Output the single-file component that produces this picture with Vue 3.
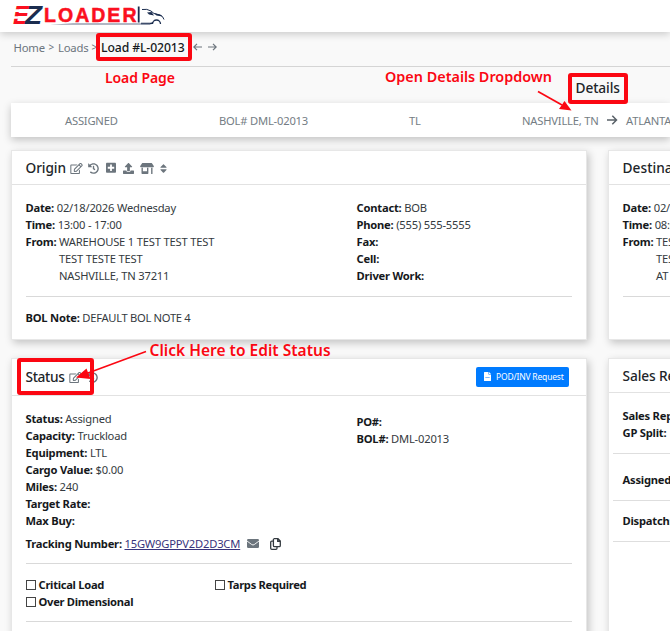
<script setup>
const icons = {
  edit: { box: '0 0 576 512', d: 'M402.3 344.9l32-32c5-5 13.7-1.500 13.700 5.700V464c0 26.500-21.500 48-48 48H48c-26.500 0-48-21.500-48-48V112c0-26.500 21.500-48 48-48h273.500c7.100 0 10.700 8.600 5.700 13.700l-32 32c-1.500 1.500-3.500 2.300-5.700 2.300H48v352h352V350.500c0-2.100.8-4.100 2.300-5.600zM558.900 143L296.300 405.700l-90.400 10c-26.200 2.900-48.500-19.200-45.600-45.600l10-90.400L432.900 17.100c22.900-22.900 59.900-22.900 82.700 0l43.200 43.200c22.900 22.900 22.900 60 .1 82.700zM460.100 174L402 115.900 216.200 301.800l-7.300 65.300 65.300-7.300L460.100 174zm64.800-79.700l-43.200-43.200c-4.100-4.100-10.800-4.100-14.800 0L436 82l58.100 58.100 30.900-30.900c4-4.200 4-10.800-.1-14.900z' },
  history: { box: '0 0 512 512', d: 'M504 255.500c.3 136.600-111.200 248.400-247.800 248.500-59 0-113.200-20.500-155.800-54.900-11.100-8.900-11.900-25.500-1.800-35.600l11.300-11.300c8.600-8.600 22.400-9.600 31.900-2C173.100 425.100 212.800 440 256 440c101.700 0 184-82.300 184-184 0-101.700-82.300-184-184-184-48.800 0-93.100 19-126.100 49.900l50.800 50.800c10.100 10.100 2.900 27.300-11.300 27.300H24c-8.800 0-16-7.200-16-16V38.600c0-14.300 17.200-21.400 27.300-11.300l49.400 49.400C129.200 34.100 189.600 8 256 8c136.800 0 247.700 110.800 248 247.500zM323.100 326.600l9.800-12.600c8.100-10.500 6.300-25.500-4.200-33.700L288 248.700V152c0-13.300-10.700-24-24-24h-16c-13.300 0-24 10.700-24 24v128l65.400 50.900c10.500 8.100 25.500 6.300 33.700-4.300z' },
  plus: { box: '0 0 448 512', d: 'M400 32H48C21.500 32 0 53.500 0 80v352c0 26.500 21.500 48 48 48h352c26.500 0 48-21.500 48-48V80c0-26.500-21.500-48-48-48zm-32 252c0 6.600-5.400 12-12 12h-92v92c0 6.600-5.400 12-12 12h-56c-6.600 0-12-5.400-12-12v-92H92c-6.600 0-12-5.400-12-12v-56c0-6.600 5.400-12 12-12h92v-92c0-6.600 5.400-12 12-12h56c6.600 0 12 5.400 12 12v92h92c6.600 0 12 5.400 12 12z' },
  upload: { box: '0 0 512 512', d: 'M296 384h-80c-13.300 0-24-10.700-24-24V192h-87.700c-17.800 0-26.700-21.500-14.100-34.100L242.300 5.700c7.500-7.500 19.800-7.500 27.300 0l152.200 152.200c12.600 12.600 3.700 34.100-14.100 34.100H320v168c0 13.300-10.700 24-24 24zm216-8v112c0 13.300-10.700 24-24 24H24c-13.300 0-24-10.700-24-24V376c0-13.300 10.700-24 24-24h136v8c0 30.900 25.100 56 56 56h80c30.900 0 56-25.100 56-56v-8h136c13.300 0 24 10.700 24 24z' },
  store: { box: '0 0 640 512', d: 'M320 384H128V224H64v256c0 17.700 14.300 32 32 32h256c17.700 0 32-14.300 32-32V224h-64v160zm314.600-241.800l-85.300-128c-6-8.900-16-14.200-26.700-14.200H117.400c-10.700 0-20.700 5.300-26.600 14.200l-85.300 128C-8.700 163.500 6.500 192 32.100 192H608c25.500 0 40.700-28.500 26.600-49.800zM512 496c0 8.800 7.200 16 16 16h32c8.800 0 16-7.200 16-16V224h-64v272z' },
  sort: { box: '0 0 320 512', d: 'M41 288h238c21.400 0 32.100 25.900 17 41L177 448c-9.400 9.400-24.600 9.400-33.900 0L24 329c-15.100-15.100-4.400-41 17-41zm255-105L177 64c-9.400-9.400-24.600-9.400-33.900 0L24 183c-15.100 15.100-4.400 41 17 41h238c21.400 0 32.100-25.900 17-41z' }
}

const originIcons = ['edit', 'history', 'plus', 'upload', 'store', 'sort']

const address = ['TEST TESTE TEST', 'NASHVILLE, TN 37211']

const contact = [
  ['Contact:', 'BOB'],
  ['Phone:', '(555) 555-5555'],
  ['Fax:', ''],
  ['Cell:', ''],
  ['Driver Work:', '']
]

const statusRows = [
  ['Status:', 'Assigned'],
  ['Capacity:', 'Truckload'],
  ['Equipment:', 'LTL'],
  ['Cargo Value:', '$0.00'],
  ['Miles:', '240'],
  ['Target Rate:', ''],
  ['Max Buy:', '']
]
</script>

<template>
  <div class="page">
    <header class="topbar">
      <svg class="logo" width="156" height="24" viewBox="0 0 156 24">
        <g font-family="Liberation Sans" font-weight="700" font-size="26">
          <text class="red" x="0" y="20.500" textLength="16" lengthAdjust="spacingAndGlyphs" font-style="italic">E</text>
          <path d="M0 7.600H14M0 14.500H12" fill="none" stroke="#fff" stroke-width="2.600" />
          <text class="navy" x="12" y="20.500" textLength="17" lengthAdjust="spacingAndGlyphs" font-style="italic">Z</text>
        </g>
        <text class="red word" x="31" y="18.800" textLength="92.500" lengthAdjust="spacing" font-family="Liberation Sans" font-weight="700" font-size="19.500">LOADER</text>
        <path d="M125.700 3.500V19.500" stroke="#1b2d4f" stroke-width="1.800" fill="none" />
        <path d="M129 6.500q5-1 9 1.500l3 2.500 6 1.500q3 1 4 4.500" fill="none" stroke="#1b2d4f" stroke-width="1" />
        <path d="M134 9.500l4.500-.5 2.500 3.500-5-1zM141 10l7 2 1.500 1.500-6-1z" fill="#1b2d4f" />
        <path d="M128 20.500h10l2.500-1.500M139.500 21a4 4 0 0 1 8 0" fill="none" stroke="#1b2d4f" stroke-width="1.300" />
        <path d="M37 21.500L60 20.600H137V21.500z" fill="#65718a" />
      </svg>
    </header>

    <nav class="crumbs">
      <span class="crumb">Home</span><span class="sep">&gt;</span>
      <span class="crumb loads">Loads</span><span class="sep">&gt;</span>
      <span class="current">Load #L-02013</span>
      <svg class="nav-arrow" width="9" height="8" viewBox="0 0 9 8"><path d="M9 4H.8M4 .8L.8 4 4 7.200" /></svg>
      <svg class="nav-arrow" width="9" height="8" viewBox="0 0 9 8"><path d="M0 4h8.200M5 .8L8.200 4 5 7.200" /></svg>
    </nav>

    <div class="details"><span>Details</span></div>

    <section class="summary">
      <span class="s-status">ASSIGNED</span>
      <span class="s-bol">BOL# DML-02013</span>
      <span class="s-type">TL</span>
      <span class="s-from">NASHVILLE, TN</span>
      <svg class="s-arrow" width="11" height="10" viewBox="0 0 11 10"><path d="M0 5h9.500M5.300 .8L9.500 5 5.300 9.200" /></svg>
      <span class="s-to">ATLANTA, GA</span>
    </section>

    <main class="grid">
      <section class="card origin">
        <div class="head">
          <h2 class="t-origin">Origin</h2>
          <svg v-for="name in originIcons" :key="name" :class="['icon', name]" :viewBox="icons[name].box"><path :d="icons[name].d" /></svg>
        </div>
        <div class="body">
          <div class="cols">
            <div>
              <p><b>Date:</b> 02/18/2026 Wednesday</p>
              <p><b>Time:</b> 13:00 - 17:00</p>
              <p><b>From:</b> WAREHOUSE 1 TEST TEST TEST</p>
              <p v-for="line in address" :key="line" class="indent">{{ line }}</p>
            </div>
            <div>
              <p v-for="[label, value] in contact" :key="label"><b>{{ label }}</b> {{ value }}</p>
            </div>
          </div>
          <hr />
          <p class="note"><b>BOL Note:</b> DEFAULT BOL NOTE 4</p>
        </div>
      </section>

      <section class="card dest">
        <div class="head"><h2 class="t-dest">Destination</h2></div>
        <div class="body">
          <div class="cols">
            <div>
              <p><b>Date:</b> 02/19/2026</p>
              <p><b>Time:</b> 08:00</p>
              <p><b>From:</b> TEST</p>
              <p class="indent">TEST</p>
              <p class="indent">AT</p>
            </div>
          </div>
          <hr />
        </div>
      </section>

      <section class="card status">
        <div class="head">
          <h2 class="t-status">Status</h2>
          <svg class="icon edit" :viewBox="icons.edit.box"><path :d="icons.edit.d" /></svg>
          <svg class="icon history" :viewBox="icons.history.box"><path :d="icons.history.d" /></svg>
          <button class="request">
            <svg width="7" height="9" viewBox="0 0 7 9"><path d="M0 .5Q0 0 .5 0H4.500V2.500H7V8.500Q7 9 6.500 9H.5Q0 9 0 8.500zM5 0L7 2H5z" fill="#fff" /><path d="M1.300 5.500h4.400" stroke="#7bb8ff" /></svg>
            <span>POD/INV Request</span>
          </button>
        </div>
        <div class="body">
          <div class="cols">
            <div>
              <p v-for="[label, value] in statusRows" :key="label"><b>{{ label }}</b> {{ value }}</p>
            </div>
            <div class="refs">
              <p><b>PO#:</b></p>
              <p><b>BOL#:</b> DML-02013</p>
            </div>
          </div>
          <div class="tracking">
            <b>Tracking Number:</b><a>15GW9GPPV2D2D3CM</a>
            <svg class="mail" width="12" height="9" viewBox="0 0 12 9"><rect width="12" height="9" rx="1.200" fill="#6c757d" /><path d="M0 2l4.700 3.500q1.300 1 2.600 0L12 2" fill="none" stroke="#fff" stroke-width=".9" /></svg>
            <svg class="copy" width="11" height="12" viewBox="0 0 11 12"><path d="M4 .7H8L10.300 3V7.500Q10.300 8.700 9.200 8.700H4.500Q3.400 8.700 3.400 7.500V1.500Q3.400.7 4.200.7zM7.700.7V3.300H10.300M3.300 3.200H1.700Q.7 3.200.7 4.200V10.200Q.7 11.300 1.800 11.300H6Q7 11.300 7 10.300V8.700" fill="none" stroke="#343a40" stroke-width="1.300" /></svg>
          </div>
          <hr />
          <div class="checks">
            <label><i></i>Critical Load</label>
            <label><i></i>Tarps Required</label>
            <label><i></i>Over Dimensional</label>
          </div>
          <hr />
        </div>
      </section>

      <section class="card sales">
        <div class="head"><h2 class="t-sales">Sales Rep</h2></div>
        <div class="row first"><p><b>Sales Rep:</b></p><p><b>GP Split:</b></p></div>
        <div class="row second"><p><b>Assigned:</b></p></div>
        <div class="row third"><p><b>Dispatch:</b></p></div>
      </section>
    </main>

    <div class="mark mark-load"></div>
    <div class="mark mark-details"></div>
    <div class="mark mark-status"></div>
    <svg class="arrows" width="670" height="631" viewBox="0 0 670 631">
      <path d="M538 91.500L562 105" stroke="#fb0712" stroke-width="1.700" />
      <path d="M571.500 110.500L559 109 564.500 101z" fill="#fb0712" />
      <path d="M146 351.500L88 373" stroke="#fb0712" stroke-width="1.600" />
      <path d="M76 377.500L86.500 368.500 90.500 379z" fill="#fb0712" />
    </svg>
    <span class="callout c-load">Load Page</span>
    <span class="callout c-details">Open Details Dropdown</span>
    <span class="callout c-status">Click Here to Edit Status</span>
  </div>
</template>

<style>
body { margin: 0; overflow: hidden; }
</style>

<style scoped>
* { box-sizing: border-box; }
.page { position: relative; width: 670px; height: 631px; overflow: hidden; background: #f9f9f9; font: 11.2px/17px "Noto Sans", sans-serif; letter-spacing: -.2px; color: #343a40; white-space: nowrap; }
.topbar { height: 32px; padding: 3px 0 0 13px; background: #fff; box-shadow: 0 2px 8px rgba(0, 0, 0, .2); letter-spacing: 0; }
.logo { display: block; overflow: visible; }
.red { fill: #fb1020; }
.navy { fill: #1b2d4f; }
.word { stroke: #fb1020; stroke-width: .5; }
.crumbs { display: flex; align-items: center; height: 35px; margin-left: 11px; padding: 0 0 4px 2.500px; border-bottom: 1px solid #d5d5d5; font-size: 11.3px; color: #6c757d; }
.sep { width: 13.500px; text-align: center; font-size: 10px; }
.crumb { width: 31px; }
.loads { width: 29.500px; }
.current { width: 85px; margin: 0 7px 0 0; font-size: 12.2px; letter-spacing: -.1px; font-weight: 500; color: #16191c; }
.nav-arrow { margin-right: 6px; fill: none; stroke: #6c757d; stroke-width: 1.200; }
.details { height: 36px; padding: 11px 0 0 575.500px; font-size: 13.7px; line-height: 20px; font-weight: 500; color: #212529; letter-spacing: -.1px; }
.summary { display: flex; align-items: center; height: 34px; margin-left: 11px; padding-left: 54px; background: #fff; box-shadow: 0 3px 8px rgba(0, 0, 0, .22); color: #747d84; }
.summary > * { flex: none; }
.s-status { width: 154px; }
.s-bol { width: 190px; }
.s-type { width: 113px; }
.s-from { width: 85px; }
.s-arrow { margin-right: 8px; fill: none; stroke: #596168; stroke-width: 1.500; }
.grid { display: grid; grid-template-columns: 576px 300px; grid-template-rows: 190px 300px; gap: 18px 22px; padding: 13px 0 0 11px; }
.card { background: #fff; border: 1px solid #e7e7e7; box-shadow: 2px 3px 8px rgba(0, 0, 0, .22); }
.grid > :nth-child(even) { margin-left: -1px; }
.head { display: flex; align-items: center; height: 34px; padding-left: 13.500px; border-bottom: 1px solid #e2e2e2; }
.status .head { height: 37px; padding-bottom: 1px; }
h2 { margin: 0; font-size: 13.7px; line-height: 20px; font-weight: 500; color: #212529; letter-spacing: -.1px; }
.t-dest { letter-spacing: .05px; }
.icon { flex: none; fill: #6c757d; height: 11px; margin-top: 1px; }
.t-origin { width: 44.500px; }
.t-status { width: 43px; letter-spacing: -.35px; }
.edit { width: 13px; margin-right: 5px; }
.history { width: 11px; margin-right: 7px; }
.plus { width: 10px; height: 11.500px; margin-right: 7px; }
.upload { width: 11px; margin-right: 6px; }
.store { width: 14px; margin-right: 6px; }
.sort { width: 7px; height: 11px; }
p { margin: 0; }
b { font-weight: 700; color: #16191c; letter-spacing: -.22px; }
.body { padding: 14px 14px 0 13.500px; }
.cols { display: grid; grid-template-columns: 331px 1fr; }
.indent { padding-left: 33.500px; }
hr { height: 1px; margin: 12px 0 0; border: 0; background: #d9d9d9; }
.note { margin-top: 12px; letter-spacing: -.3px; }
.refs { padding-top: 3px; }
.request { display: flex; align-items: center; gap: 5px; width: 93px; height: 20px; margin: 0 17px 0 auto; padding: 0 0 0 8px; border: 0; border-radius: 2px; background: #007bff; color: #fff; font: 8.500px "Noto Sans", sans-serif; letter-spacing: -.18px; }
.tracking { display: flex; align-items: center; height: 17px; margin-top: 6px; }
.tracking b { width: 99px; }
.tracking a { width: 122.500px; color: #38337c; text-decoration: underline; }
.copy { margin-left: 11px; }
.tracking + hr { margin-top: 11px; }
.checks { display: grid; grid-template-columns: 189px 1fr; margin-top: 12px; }
.checks + hr { margin-top: 11px; }
.checks label { display: flex; align-items: center; height: 17px; font-weight: 700; color: #16191c; letter-spacing: -.3px; }
.checks i { width: 10px; height: 10px; margin-right: 3px; border: 1px solid #444; }
.row { margin-left: 4px; padding-left: 9.500px; border-bottom: 1px solid #dedede; }
.first { height: 61px; padding-top: 14px; }
.second { height: 47px; padding-top: 17px; }
.third { height: 41px; padding-top: 11px; }
.mark { position: absolute; border: 4px solid #fb0712; border-radius: 3px; }
.mark-load { left: 96px; top: 33px; width: 96px; height: 28px; }
.mark-details { left: 568px; top: 73px; width: 60px; height: 31px; }
.mark-status { left: 17px; top: 358px; width: 77px; height: 37px; }
.arrows { position: absolute; left: 0; top: 0; }
.callout { position: absolute; color: #fb0712; font-size: 14px; line-height: 20px; font-weight: 600; letter-spacing: 0; }
.c-load { left: 105px; top: 68px; letter-spacing: -.1px; }
.c-details { left: 385px; top: 67px; font-size: 14.4px; letter-spacing: 0; }
.c-status { left: 149.500px; top: 340px; font-size: 15.500px; letter-spacing: .02px; }
</style>
